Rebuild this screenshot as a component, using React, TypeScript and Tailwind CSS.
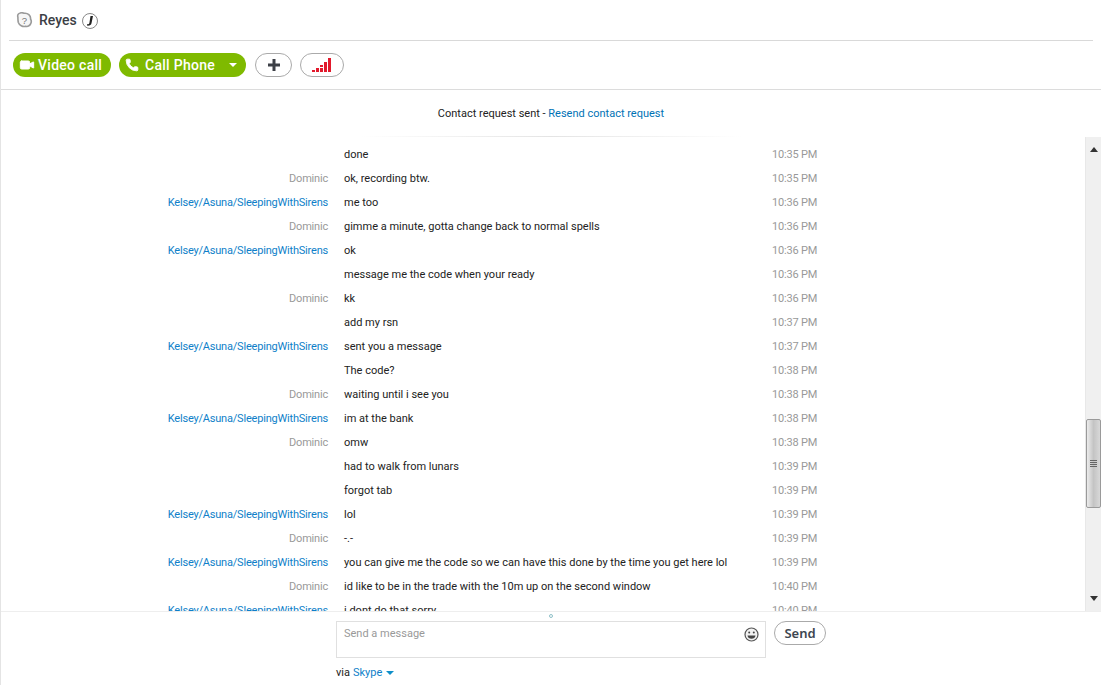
import { Phone, Video } from "lucide-react";

type Message = {
  name?: string;
  text: string;
  time: string;
};

const KELSEY = "Kelsey/Asuna/SleepingWithSirens";

const messages: Message[] = [
  { text: "done", time: "10:35 PM" },
  { name: "Dominic", text: "ok, recording btw.", time: "10:35 PM" },
  { name: KELSEY, text: "me too", time: "10:36 PM" },
  { name: "Dominic", text: "gimme a minute, gotta change back to normal spells", time: "10:36 PM" },
  { name: KELSEY, text: "ok", time: "10:36 PM" },
  { text: "message me the code when your ready", time: "10:36 PM" },
  { name: "Dominic", text: "kk", time: "10:36 PM" },
  { text: "add my rsn", time: "10:37 PM" },
  { name: KELSEY, text: "sent you a message", time: "10:37 PM" },
  { text: "The code?", time: "10:38 PM" },
  { name: "Dominic", text: "waiting until i see you", time: "10:38 PM" },
  { name: KELSEY, text: "im at the bank", time: "10:38 PM" },
  { name: "Dominic", text: "omw", time: "10:38 PM" },
  { text: "had to walk from lunars", time: "10:39 PM" },
  { text: "forgot tab", time: "10:39 PM" },
  { name: KELSEY, text: "lol", time: "10:39 PM" },
  { name: "Dominic", text: "-.-", time: "10:39 PM" },
  { name: KELSEY, text: "you can give me the code so we can have this done by the time you get here lol", time: "10:39 PM" },
  { name: "Dominic", text: "id like to be in the trade with the 10m up on the second window", time: "10:40 PM" },
  { name: KELSEY, text: "i dont do that sorry", time: "10:40 PM" },
];

function SignalBars() {
  return (
    <svg width="20" height="14" viewBox="0 0 20 14" fill="#e2192c">
      <rect x="0" y="12" width="3" height="2" />
      <rect x="4" y="10" width="3" height="4" />
      <rect x="8" y="7" width="3" height="2" />
      <rect x="8" y="10" width="3" height="4" />
      <rect x="12" y="4" width="3" height="10" />
      <rect x="16" y="0" width="3" height="14" />
    </svg>
  );
}

function UnknownStatus() {
  return (
    <svg width="17" height="17" viewBox="0 0 16 16" fill="none">
      <path
        d="M4 .9c1.300-.4 2.600-.2 3.700.3 3.400-.5 6.400 2.100 6 5.400.7 1.200.9 2.500.4 3.700-.6 2.300-2.900 3.800-5 3.100-2.900.8-5.900-.9-6.900-3.600C1.700 8 1.800 6.500 1.800 5 1.100 3 2.200 1.200 4 .9z"
        fill="#f6f6f6"
        stroke="#9a9a9a"
        strokeWidth="1.500"
      />
      <text x="5.500" y="11" fontSize="9" fontFamily="Liberation Sans, sans-serif" fill="#777">
        ?
      </text>
    </svg>
  );
}

function MoodNote() {
  return (
    <span className="flex h-[16px] w-[16px] items-center justify-center rounded-full border border-[#888]">
      <svg width="8" height="10" viewBox="0 0 8 10" fill="#222">
        <path d="M4.500 0H7L5.500 7.200C5.200 9 3.800 9.800 1 9.600V8.300C2.600 8.400 3.200 8 3.400 7z" />
      </svg>
    </span>
  );
}

function Scrollbar() {
  return (
    <div className="flex w-[16px] flex-col border-l border-[#e8e8e8] bg-[#f0f0f0]">
      <svg className="mt-[10px] ml-[4px]" width="8" height="5" viewBox="0 0 8 5" fill="#333">
        <path d="M4 0 8 5H0z" />
      </svg>
      <div className="mt-[267px] flex h-[89px] w-[15px] items-center justify-center rounded-[2px] border border-[#9a9a9a] bg-gradient-to-r from-[#ececec] via-[#c4c4c4] to-[#d8d8d8]">
        <div className="flex w-[7px] flex-col gap-[1px]">
          <div className="h-[1px] bg-[#666]" />
          <div className="h-[1px] bg-[#666]" />
          <div className="h-[1px] bg-[#666]" />
          <div className="h-[1px] bg-[#666]" />
        </div>
      </div>
      <svg className="mt-[88px] ml-[4px]" width="8" height="5" viewBox="0 0 8 5" fill="#333">
        <path d="M0 0H8L4 5z" />
      </svg>
    </div>
  );
}

export default function App() {
  return (
    <div className="relative flex h-[685px] w-[1101px] flex-col overflow-hidden border-l border-[#e4e4e4] bg-white font-['Roboto',sans-serif] text-[11px] text-[#222]">
      <div className="mx-[8px] flex h-[41px] items-center gap-[5px] border-b border-[#d9d9d9] pt-[1px] pl-[7px]">
        <UnknownStatus />
        <span className="ml-[1px] text-[14px] font-medium text-[#3c3f46]">Reyes</span>
        <MoodNote />
      </div>

      <div className="flex h-[49px] items-center gap-[8px] border-b border-[#dcdcdc] pl-[12px]">
        <button className="flex h-[24px] w-[98px] items-center gap-[3px] rounded-full bg-[#7fba00] pl-[6px] text-[14px] font-medium tracking-[0.02em] text-white">
          <Video size={16} fill="white" strokeWidth={1.500} />
          Video call
        </button>
        <button className="flex h-[24px] w-[127px] items-center rounded-full bg-[#7fba00] pl-[6px] text-[14px] font-medium tracking-[0.02em] text-white">
          <Phone size={14} fill="white" strokeWidth={1.500} />
          <span className="ml-[6px]">Call Phone</span>
          <span className="ml-[14px] h-0 w-0 border-x-[4px] border-t-[4px] border-x-transparent border-t-white" />
        </button>
        <button className="ml-[1px] flex h-[24px] w-[37px] items-center justify-center rounded-full border border-[#aaa] bg-white">
          <svg width="14" height="14" viewBox="0 0 14 14" fill="#3c3f46">
            <path d="M5.500 1h3v4.500H13v3H8.500V13h-3V8.500H1v-3h4.500z" />
          </svg>
        </button>
        <button className="flex h-[24px] w-[44px] items-center justify-center rounded-full border border-[#aaa] bg-white">
          <SignalBars />
        </button>
      </div>

      <div className="flex h-[47px] flex-col items-center">
        <p className="mt-[16px] h-[15px] leading-[15px] text-[#222]">
          Contact request sent - <span className="text-[#0072b5]">Resend contact request</span>
        </p>
        <div className="mt-[15px] h-[1px] w-[380px] bg-gradient-to-r from-white via-[#e4e4e4] to-white" />
      </div>

      <div className="flex h-[475px] border-b border-[#eeeeee]">
        <div className="flex-1 overflow-hidden pt-[6px]">
          {messages.map((m, i) => (
            <div key={i} className="flex h-[24px] items-center">
              <span
                className={
                  m.name === KELSEY
                    ? "w-[327px] text-right tracking-[-0.2px] text-[#0f7fc9]"
                    : "w-[327px] text-right tracking-[-0.2px] text-[#999999]"
                }
              >
                {m.name}
              </span>
              <span className="ml-[16px] w-[428px] text-[#222]">{m.text}</span>
              <span className="tracking-[-0.2px] text-[#999999]">{m.time}</span>
            </div>
          ))}
        </div>
        <Scrollbar />
      </div>

      <div className="absolute top-[614px] left-[548px] h-[4px] w-[4px] rounded-full border border-[#8fc0c8]" />

      <div className="ml-[335px] mt-[9px] flex items-start gap-[8px]">
        <div className="flex h-[37px] w-[430px] justify-between border border-[#e0e0e0] pl-[7px] pr-[6px] pt-[4px] text-[#999999]">
          <span>Send a message</span>
          <svg className="mt-[1px]" width="15" height="15" viewBox="0 0 15 15" fill="none">
            <circle cx="7.500" cy="7.500" r="6.500" fill="#f2f2f2" stroke="#555" strokeWidth="1.200" />
            <circle cx="5.200" cy="5.500" r="1" fill="#444" />
            <circle cx="9.800" cy="5.500" r="1" fill="#444" />
            <path d="M3.500 8.500h8c0 2-2 3.300-4 3.300s-4-1.300-4-3.300z" fill="#444" />
          </svg>
        </div>
        <button className="h-[24px] w-[52px] rounded-full border border-[#aaa] bg-white pt-[1px] font-['Noto_Sans',sans-serif] text-[13px] font-semibold text-[#3c4650]">
          Send
        </button>
      </div>

      <div className="ml-[335px] mt-[7px] flex items-center">
        via <span className="ml-[3px] text-[#0f7fc9]">Skype</span>
        <span className="ml-[4px] h-0 w-0 border-x-[4px] border-t-[4px] border-x-transparent border-t-[#0f8fc9]" />
      </div>
    </div>
  );
}
